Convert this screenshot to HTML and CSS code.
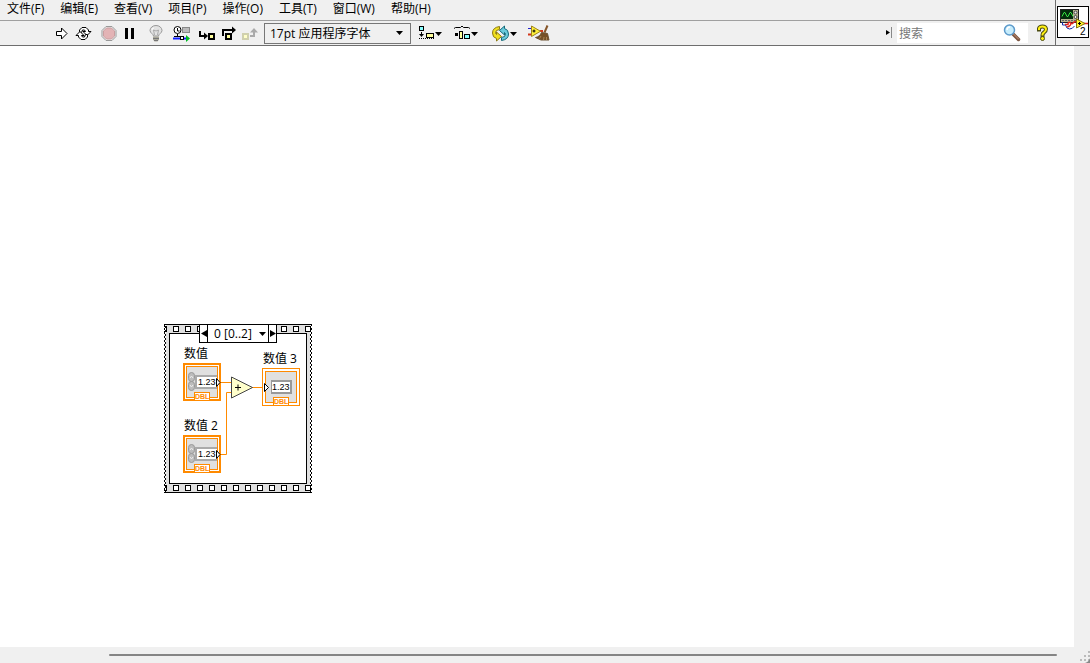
FILE: index.html
```html
<!DOCTYPE html>
<html lang="zh-CN">
<head>
<meta charset="utf-8">
<meta name="viewport" content="width=device-width, initial-scale=1">
<title>程序框图</title>
<link rel="stylesheet" href="styles.css">
</head>
<body>
<div class="window">
  <header class="header">
    <div class="bars">
      <nav class="menu" aria-label="菜单">
        <button>文件(F)</button>
        <button>编辑(E)</button>
        <button>查看(V)</button>
        <button>项目(P)</button>
        <button>操作(O)</button>
        <button>工具(T)</button>
        <button>窗口(W)</button>
        <button>帮助(H)</button>
      </nav>
      <div class="toolbar">
        <div class="tools">
          <button class="tool narrow" aria-label="运行"><svg viewBox="50 21 20 24"><path d="M56.500 31.500h5v-3.500l5.500 5.500-5.500 5.500v-3.500h-5z" fill="#fff" stroke="#000"/></svg></button>
          <button class="tool wide" aria-label="连续运行"><svg viewBox="70 21 28 24"><defs><path id="loop" d="M79.500 32.500v-2.500l2.500-2.500h4l2.500 2.500v1.500h2.500l-4 4-4-4h2.500l-1-1.500h-2l-1 2.500z"/></defs><g fill="#fff" stroke="#000"><use href="#loop"/><use href="#loop" transform="rotate(180 83.500 33.500)"/></g></svg></button>
          <button class="tool narrow" aria-label="中止执行"><svg viewBox="98 21 20 24"><path d="M106 26.500h6l4 4v6l-4 4h-6l-4-4v-6z" fill="#eee" stroke="#999"/><path d="M106.500 28h5l3 3v5l-3 3h-5l-3-3v-5z" fill="#e3b3b5" stroke="#c99ea0"/></svg></button>
          <button class="tool" aria-label="暂停"><svg viewBox="118 21 24 24"><path d="M125 28h3v11h-3zM131 28h3v11h-3z"/></svg></button>
          <button class="tool wide" aria-label="高亮显示执行过程"><svg viewBox="142 21 28 24"><path d="M153.500 36c0-2-3.500-3-3.500-5.500a6 5 0 0 1 12 0c0 2.500-3.500 3.500-3.500 5.500z" fill="#e2e2e2" stroke="#999"/><path d="M153.500 30l1 5M158.500 30l-1 5M153.500 30l2.500 1 2.500-1" fill="none" stroke="#aaa"/><path d="M152 30q0-2 2-2" fill="none" stroke="#fff"/><path d="M153 36.500h6v3l-1.500 2h-3l-1.500-2z" fill="#aaa89a"/><path d="M153 38.500h6M154 40.500h4" stroke="#777"/></svg></button>
          <button class="tool" aria-label="保存连线值"><svg viewBox="170 21 24 24"><circle cx="177.500" cy="30" r="3.500" fill="#fff" stroke="#000"/><path d="M177.500 28v3h2M177.500 34v3M174 36.500h6" fill="none" stroke="#000"/><rect x="182.500" y="27.500" width="7" height="5" fill="#bbb" stroke="#888"/><path d="M173 38.500h7M184 38.500h2" stroke="#12f" stroke-width="2"/><rect x="180.500" y="36.500" width="3" height="3" fill="#fff" stroke="#000"/><path d="M186 37.500v-2.500l4 3.500-4 3.500z" fill="#0b2"/></svg></button>
          <button class="tool" aria-label="单步步入"><svg viewBox="194 21 24 24"><path d="M200 31v5h4" fill="none" stroke="#000" stroke-width="2"/><path d="M204 32.500l4 3.500-4 3.500z"/><rect x="209" y="34" width="5" height="5" fill="#ffff9c" stroke="#000" stroke-width="2"/></svg></button>
          <button class="tool narrow" aria-label="单步步过"><svg viewBox="218 21 20 24"><path d="M223 36v-6h9" fill="none" stroke="#000" stroke-width="2"/><path d="M232 26.500l4 3.500-4 3.500z"/><rect x="226" y="34" width="5" height="5" fill="#ffff9c" stroke="#000" stroke-width="2"/></svg></button>
          <button class="tool" aria-label="单步步出"><svg viewBox="238 21 24 24"><rect x="243" y="34" width="5" height="5" fill="#ffffc8" stroke="#d0d0ae" stroke-width="2"/><path d="M250 36h4v-4" fill="none" stroke="#aaa" stroke-width="2"/><path d="M250 32.500l4-4.500 4 4.500z" fill="#aaa"/></svg></button>
        </div>
        <div class="drop font-drop">
          <select class="font-select" aria-label="文本设置"><option>17pt 应用程序字体</option></select>
          <svg class="caret" viewBox="0 0 7 4"><path d="M0 0h7L3.500 4z"/></svg>
        </div>
        <div class="arrange">
          <button class="tool wide" aria-label="对齐对象"><svg viewBox="416 21 28 24"><rect x="419.500" y="26.500" width="4" height="4" fill="#8ff" stroke="#000"/><path d="M421.500 32v4" stroke="#000"/><path d="M419 34h5l-2.500 3z"/><path d="M419 38.500h16" stroke="#000" stroke-dasharray="1 1"/><rect x="426.500" y="33.500" width="7" height="4" fill="#ffff9c" stroke="#000"/><path d="M435 32h7l-3.500 4z"/></svg></button>
          <button class="tool wide" aria-label="分布对象"><svg viewBox="452 21 28 24"><path d="M454 28.500l1.500-1h5l1.500-1.500 1.500 1.500h5l1.500 1" fill="none" stroke="#000"/><path d="M455 33h3v3h-3z"/><rect x="459.500" y="31.500" width="3" height="7" fill="#ffff9c" stroke="#000"/><rect x="464.500" y="34.500" width="5" height="4" fill="#8ff" stroke="#000"/><path d="M471 32h7l-3.500 4z"/></svg></button>
          <button class="tool wider" aria-label="重新排序"><svg viewBox="488 21 32 24"><path d="M499.500 26.500q-7 1-7 6.500 0 4.500 4 5.500v2.500l5-4.500-5-4.500v2.500q-1-.5-1-2 0-2.500 4-3z" fill="#f0e020" stroke="#8c7a13"/><path d="M501.500 40.500q7-1 7-6.500 0-4.500-4-5.500v-2.500l-5 4.500 5 4.500v-2.500q1 .5 1 2 0 2.500-4 3z" fill="#6acbdc" stroke="#146878"/><path d="M510 32h7l-3.500 4z"/></svg></button>
          <button class="tool wide" aria-label="整理程序框图"><svg viewBox="524 21 28 24"><path d="M528 28.500h4" stroke="#22c" stroke-width="1"/><path d="M528 34.500h4M540 31h3" stroke="#d2381c" stroke-width="2"/><path d="M531.500 26v10.500l9-5.250z" fill="#fff13a" stroke="#9e831b"/><path d="M532.500 31h3M534 29.500v3" stroke="#000"/><path d="M547.500 25.500l-3 7" stroke="#865629" stroke-width="2"/><path d="M541.500 32.500l6 1 1.500 6.500h-8l-5.500-2.500c3-.5 5-2.500 6-5z" fill="#765026" stroke="#6b5031"/><path d="M541 36l-1.500 2.500M544 37l-.5 3M546.500 37v3" stroke="#a98555"/></svg></button>
        </div>
        <div class="search-area">
          <svg class="grip" viewBox="885 24 8 20"><path d="M886 31v5l4-2.500z"/><path d="M891.500 28v11" stroke="#888"/></svg>
          <label class="search"><input type="text" placeholder="搜索" aria-label="搜索"><svg viewBox="1003 25 18 18"><path d="M1013.500 35.500l5 5" stroke="#7c5540" stroke-width="3.500" stroke-linecap="round"/><path d="M1013 34.500l5.500 5.500" stroke="#c8987a" stroke-linecap="round"/><circle cx="1009.500" cy="31" r="5" fill="#c7edfc" stroke="#5c9acb" stroke-width="1.500"/><path d="M1007 31a3 3 0 0 1 3-3" fill="none" stroke="#fff" stroke-width="1.500"/></svg></label>
          <button class="help" aria-label="即时帮助"><svg viewBox="1036 25 13 18"><g fill="none" stroke-linecap="square"><path d="M1039 30.500v-1q.5-2 3.500-2t3.500 2.500q0 2-2 3.500-1.500 1-1.500 2.500" stroke="#4c4c10" stroke-width="4"/><path d="M1039 30v-.5q.5-2 3.500-2t3.500 2.500q0 2-2 3.500-1.500 1-1.500 2" stroke="#fff010" stroke-width="2"/></g><circle cx="1042.500" cy="39.500" r="2" fill="#fff010" stroke="#4c4c10"/></svg></button>
        </div>
      </div>
    </div>
    <div class="icon-pane">
      <svg class="vi-icon" viewBox="1057 6 32 32"><rect x="1057.500" y="6.500" width="31" height="31" fill="#fff" stroke="#000"/><rect x="1060.500" y="9.500" width="18" height="13" fill="#b9b592" stroke="#222"/><rect x="1061" y="10" width="12" height="9" fill="#032b0b"/><path d="M1062 16.500l2-4h1l2 4h1l2-4h1l2 4" fill="none" stroke="#37e342"/><circle cx="1075.500" cy="12.500" r="1.500" fill="#eee" stroke="#444"/><circle cx="1075.500" cy="17" r="1.500" fill="#eee" stroke="#444"/><path d="M1062 20.500h14" stroke="#666" stroke-dasharray="2 1"/><path d="M1062.500 22v3h3q1 4 4 4t5-3" fill="none" stroke="#112ca8"/><path d="M1065 24.500h3q0-3 2-2t0 3-3 1M1072 24q2-3 5-2.500M1084 23.500h4" fill="none" stroke="#e3231b" stroke-width="1.500"/><path d="M1076.500 19v9l8.500-4.500z" fill="#fff32c" stroke="#86720a"/><path d="M1078 23.500h3M1079.500 22v3" stroke="#000"/><text class="vi-number" x="1080" y="35">2</text></svg>
    </div>
  </header>

  <main class="workspace">
    <section class="canvas" aria-label="程序框图">
      <div class="sequence">
        <svg class="diagram" viewBox="164 324 148 169">
          <defs>
            <pattern id="holes" x="173" y="326" width="12" height="6" patternUnits="userSpaceOnUse"><rect x=".5" y=".5" width="5" height="5" fill="#fff" stroke="#000"/></pattern>
            <pattern id="holes-bottom" x="173" y="485" width="12" height="6" patternUnits="userSpaceOnUse"><rect x=".5" y=".5" width="5" height="5" fill="#fff" stroke="#000"/></pattern>
            <pattern id="edge" x="164" y="324" width="3" height="4" patternUnits="userSpaceOnUse"><path d="M0 0h1v2H0zM1 2h1v2H1z"/></pattern>
            <pattern id="edge-right" x="309" y="324" width="3" height="4" patternUnits="userSpaceOnUse"><path d="M2 0h1v2H2zM1 2h1v2H1z"/></pattern>
            <g id="terminal-label"><rect x="11.500" y="29.500" width="15" height="8" fill="#fff" stroke="#ff8a00"/><text class="type" x="12" y="36">DBL</text></g>
            <g id="control">
              <rect width="38" height="38" fill="#ff8a00"/><rect x="2" y="2" width="34" height="34" fill="#fff"/>
              <rect x="3.500" y="3.500" width="31" height="31" fill="#e0e0e0" stroke="#ff8a00"/>
              <rect x="12" y="12" width="22" height="14" fill="#aaa"/><rect x="14" y="14" width="20" height="10" fill="#fff"/>
              <rect x="5.500" y="9.500" width="6" height="9" rx="3" fill="#bcbcbc" stroke="#999"/><rect x="5.500" y="18.500" width="6" height="9" rx="3" fill="#bcbcbc" stroke="#999"/>
              <path d="M7 15l1.500-2 1.500 2M7 22l1.500 2 1.500-2" fill="none" stroke="#eee"/>
              <text class="digits" x="15" y="22">1.23</text><path d="M33.500 15.500v8l3.500-4z" fill="#fff" stroke="#000"/>
              <use href="#terminal-label"/>
            </g>
            <g id="indicator">
              <rect x=".5" y=".5" width="37" height="37" fill="#fff" stroke="#ff8a00"/><rect x="3.500" y="3.500" width="31" height="31" fill="#e0e0e0" stroke="#ff8a00"/>
              <rect x="9" y="12" width="21" height="14" fill="#999"/><rect x="10" y="14" width="18" height="10" fill="#fff"/>
              <text class="digits" x="10" y="22">1.23</text><path d="M2.500 15.500v8l4-4z" fill="#fff" stroke="#000"/>
              <use href="#terminal-label"/>
            </g>
          </defs>
          <rect x="166" y="324" width="144" height="169" fill="#e0e0e0"/>
          <path d="M164 324.500h148M164 492.500h148" stroke="#000"/>
          <rect x="164" y="326" width="148" height="6" fill="url(#holes)"/>
          <rect x="164" y="485" width="148" height="6" fill="url(#holes-bottom)"/>
          <rect x="169.500" y="333.500" width="137" height="150" fill="#fff" stroke="#000"/>
          <rect x="164" y="324" width="3" height="169" fill="url(#edge)"/>
          <rect x="309" y="324" width="3" height="169" fill="url(#edge-right)"/>
          <path d="M221 382.500h11M221 454.500h5.500v-62h5M252 387.500h10" fill="none" stroke="#ff8a00"/>
          <path d="M231.500 377v21l21-10.500z" fill="#ffffcb" stroke="#444"/>
          <path d="M235 387.500h6M238 384.500v6" stroke="#000"/>
          <use href="#control" x="183" y="363"/>
          <use href="#control" x="183" y="435"/>
          <use href="#indicator" x="262" y="368"/>
        </svg>
        <span class="label label-a">数值</span>
        <span class="label label-b">数值 2</span>
        <span class="label label-sum">数值 3</span>
        <div class="frame-selector">
          <button class="step" aria-label="上一帧"><svg viewBox="0 0 6 7"><path d="M6 0v7L0 3.500z"/></svg></button>
          <div class="drop frame-drop">
            <select class="frame-select" aria-label="帧"><option>0 [0..2]</option></select>
            <svg class="caret" viewBox="0 0 7 4"><path d="M0 0h7L3.500 4z"/></svg>
          </div>
          <button class="step" aria-label="下一帧"><svg viewBox="0 0 6 7"><path d="M0 0v7l6-3.500z"/></svg></button>
        </div>
      </div>
    </section>
    <div class="scroll-y"></div>
    <div class="scroll-x"><div class="thumb"></div></div>
    <svg class="resize" viewBox="0 0 16 16"><path d="M10 8h2v2h-2zM10 12h2v2h-2zM6 12h2v2H6zM14 8h2v2h-2zM14 4h2v2h-2zM14 12h2v2h-2z" fill="#bbb"/><path d="M16 11v5h-5q4-1 5-5z" fill="#888"/></svg>
  </main>
</div>
</body>
</html>
```
FILE: styles.css
```css
* { box-sizing: border-box; }

body {
  margin: 0;
  background: #f0f0f0;
  color: #000;
  font: 12px/16px "Open Sans", "Noto Sans CJK SC", sans-serif;
}

button, input, select {
  margin: 0;
  padding: 0;
  border: 0;
  border-radius: 0;
  background: none;
  color: inherit;
  font: inherit;
}

svg { display: block; }

.window { display: flex; flex-direction: column; height: 100vh; }

.header { display: flex; border-bottom: 1px solid #6e6e6e; }
.bars { flex: 1; min-width: 0; }

.menu {
  display: flex;
  gap: 16px;
  height: 21px;
  padding: 0 7px 3px;
  border-bottom: 1px solid #a0a0a0;
}
.menu button { white-space: nowrap; }

.toolbar { display: flex; align-items: center; height: 24px; padding-left: 50px; }
.tools { display: flex; margin-right: 2px; }
.tool { width: 24px; height: 24px; }
.tool svg { width: 100%; height: 100%; }
.narrow { width: 20px; }
.wide { width: 28px; }
.wider { width: 32px; }

.drop { display: flex; align-items: center; }
.drop select { appearance: none; width: 100%; height: 100%; }
.drop .caret { flex: none; width: 7px; height: 4px; margin-left: -14px; pointer-events: none; }
.font-drop { width: 147px; height: 21px; border: 1px solid #777; }
.font-select { padding: 2px 0 0 5px; }

.arrange { display: flex; gap: 8px; margin-left: 5px; }
.arrange .wider + .wide { margin-left: -4px; }

.search-area { display: flex; align-items: center; margin-left: auto; padding-right: 6px; }
.grip { width: 8px; height: 20px; margin-right: 4px; }
.search {
  display: flex;
  align-items: center;
  width: 131px;
  height: 20px;
  padding: 0 7px 0 2px;
  background: #fff;
}
.search input { flex: 1; min-width: 0; padding-top: 2px; outline: 0; }
.search input::placeholder { color: #777; opacity: 1; }
.search svg { width: 18px; height: 18px; }
.help { margin-left: 8px; }
.help svg { width: 13px; height: 18px; }

.icon-pane { padding: 6px 1px 0; border-left: 1px solid #6e6e6e; }
.vi-icon { width: 32px; height: 32px; }
.vi-number { font: 10px "Liberation Sans", sans-serif; }

.workspace {
  flex: 1;
  min-height: 0;
  display: grid;
  grid-template: minmax(0, 1fr) 16px / minmax(0, 1fr) 16px;
}
.canvas { position: relative; overflow: hidden; background: #fff; }
.scroll-x { display: flex; align-items: center; padding: 0 17px 0 109px; }
.thumb { flex: 1; height: 2px; border-radius: 1px; background: #858585; }
.resize { width: 16px; height: 16px; }

.sequence { position: absolute; left: 164px; top: 278px; }
.diagram { width: 148px; height: 169px; }
.digits { font: 9px "Liberation Sans", sans-serif; }
.type { font: bold 7px "Liberation Sans", sans-serif; fill: #ff8a00; }
.label { position: absolute; white-space: nowrap; }
.label-a { left: 20px; top: 22px; }
.label-b { left: 20px; top: 94px; }
.label-sum { left: 99px; top: 27px; }

.frame-selector {
  position: absolute;
  left: 35px;
  top: 0;
  display: flex;
  height: 19px;
  border: 1px solid #000;
  background: #fff;
}
.step { display: grid; place-items: center; width: 7px; }
.step svg { width: 6px; height: 7px; }
.frame-drop { width: 62px; border: solid #000; border-width: 0 1px; }
.frame-drop .caret { margin-left: -9px; }
.frame-select { padding-left: 6px; }
```
